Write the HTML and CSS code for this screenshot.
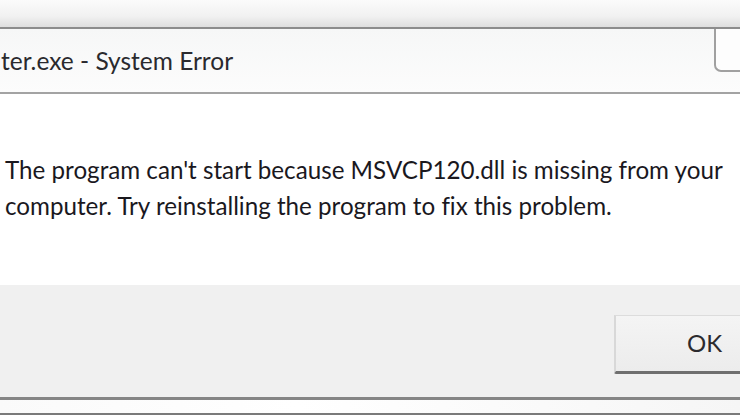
FILE: index.html
```html
<!DOCTYPE html>
<html>
<head>
<meta charset="utf-8">
<link rel="stylesheet" href="styles.css">
</head>
<body>
<div class="dialog">
  <div class="topstrip"></div>
  <div class="titlebar">
    <div class="title">ter.exe - System Error</div>
    <div class="closebtn"></div>
  </div>
  <div class="content">
    <p class="msg">The program can't start because MSVCP120.dll is missing from your<br>computer. Try reinstalling the program to fix this problem.</p>
  </div>
  <div class="footer">
    <div class="okbtn">OK</div>
  </div>
  <div class="under"></div>
  <div class="below"></div>
</div>
</body>
</html>
```
FILE: styles.css
```css
html, body {
  margin: 0;
  padding: 0;
  background: #ffffff;
}
body {
  width: 740px;
  height: 416px;
  overflow: hidden;
  font-family: "Lato", "Noto Sans", sans-serif;
  font-variant-ligatures: none;
}
.dialog {
  display: flex;
  flex-direction: column;
  width: 740px;
}
.topstrip {
  height: 27px;
  background: linear-gradient(#fbfbfb, #f1f1f1 60%, #dedede);
}
.titlebar {
  height: 63px;
  border-top: 2px solid #8c8c8c;
  border-bottom: 2px solid #a3a3a3;
  background: linear-gradient(#f6f7f7, #fcfcfc);
  display: flex;
  justify-content: space-between;
  align-items: flex-start;
}
.title {
  margin-top: 17px;
  padding-left: 1px;
  font-size: 24.5px;
  line-height: 30px;
  color: #2a2a2e;
}
.closebtn {
  width: 24px;
  height: 41px;
  border-left: 2px solid #a0a0a0;
  border-bottom: 2px solid #a0a0a0;
  border-bottom-left-radius: 7px;
  background: #fdfdfd;
}
.content {
  height: 191px;
  background: #ffffff;
}
.msg {
  margin: 0;
  padding: 58px 0 0 5px;
  font-size: 24.2px;
  line-height: 36px;
  color: #1a181e;
}
.footer {
  height: 112px;
  background: #f0f0f0;
  display: flex;
  justify-content: flex-end;
  align-items: flex-start;
  padding-top: 30px;
  box-sizing: border-box;
}
.okbtn {
  width: 126px;
  height: 59px;
  box-sizing: border-box;
  border-left: 2px solid #d8d8d8;
  border-top: 1px solid #dcdcdc;
  border-bottom: 3px solid #6f6f6f;
  border-bottom-left-radius: 2px;
  background: linear-gradient(#f4f4f4, #ececec);
  font-size: 24px;
  line-height: 54px;
  color: #2b2a2e;
  padding-left: 71px;
}
.under {
  height: 13px;
  border-top: 3px solid #858585;
  border-bottom: 2px solid #7a7a7a;
  background: linear-gradient(90deg, #fafafa, #ffffff 40%, #f6f6f6);
}
.below {
  height: 10px;
  background: #ffffff;
}
```
